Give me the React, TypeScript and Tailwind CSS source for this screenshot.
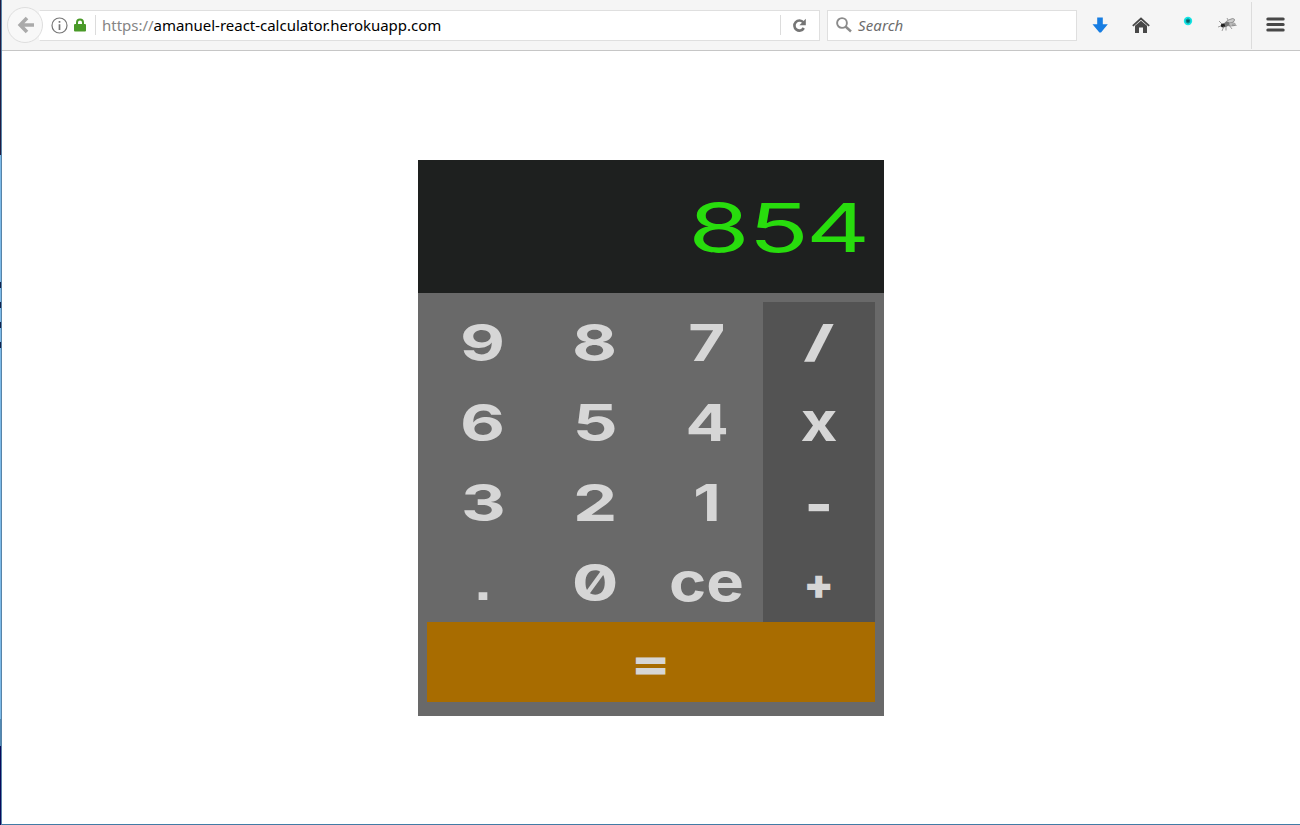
type Key = { label: string; glyph: string };

const digits: Key[] = [
  { label: "9", glyph: "translate-y-px scale-x-[1.36]" },
  { label: "8", glyph: "translate-y-px scale-x-[1.36]" },
  { label: "7", glyph: "translate-y-px scale-x-[1.25]" },
  { label: "6", glyph: "translate-y-px scale-x-[1.36]" },
  { label: "5", glyph: "translate-y-px scale-x-[1.38]" },
  { label: "4", glyph: "translate-y-px scale-x-[1.26]" },
  { label: "3", glyph: "translate-y-px scale-x-[1.36]" },
  { label: "2", glyph: "translate-y-px scale-x-[1.38]" },
  { label: "1", glyph: "translate-y-px scale-x-[1.25]" },
  { label: ".", glyph: "translate-y-px scale-x-[1.2] font-['Liberation_Sans',sans-serif]" },
  { label: "0", glyph: "translate-y-px scale-x-[1.36]" },
  { label: "ce", glyph: "-translate-y-px scale-x-[1.15] text-[55px]" },
];

const operators: Key[] = [
  { label: "/", glyph: "scale-x-[1.6] scale-y-[0.85]" },
  { label: "x", glyph: "-translate-y-px scale-x-[1.16] text-[55px]" },
  { label: "-", glyph: "translate-y-[2px] scale-x-[1.2] scale-y-[1.2]" },
  { label: "+", glyph: "translate-y-[2px] scale-x-[0.86] scale-y-[0.82] font-black" },
];

function CalcKey({ label, glyph }: Key) {
  return (
    <button className="flex h-20 w-full items-center justify-center leading-[80px]">
      <span className={`inline-block ${glyph}`}>{label}</span>
    </button>
  );
}

function Toolbar() {
  return (
    <header className="flex h-[51px] shrink-0 items-center border-b border-[#c6c6c6] bg-[#f5f5f5]">
      <div className="z-10 ml-[5px] flex size-9 shrink-0 items-center justify-center rounded-full border border-[#dedede] bg-[#f8f8f8]">
        <svg className="ml-[2px]" width="18" height="18" viewBox="0 0 18 18" fill="none" stroke="#aaa" strokeWidth="3.6">
          <path d="M17 9H4M10 2L3.2 9L10 16" />
        </svg>
      </div>
      <div className="-ml-1 flex h-[31px] w-[781px] shrink-0 items-center border border-[#dfdfdf] border-l-transparent bg-white">
        <svg className="ml-[11px]" width="17" height="17" viewBox="0 0 17 17" fill="none" stroke="#777">
          <circle cx="8.5" cy="8.5" r="7.5" strokeWidth="1.2" />
          <path d="M8.5 7.3V13M8.5 4V5.8" strokeWidth="1.7" />
        </svg>
        <svg className="ml-[6px]" width="12" height="14" viewBox="0 0 12 14">
          <path d="M3 7V4.5a3 3 0 0 1 6 0V7" fill="none" stroke="#4a9a28" strokeWidth="2" />
          <rect y="6" width="12" height="7.5" rx="1" fill="#4a9a28" />
        </svg>
        <div className="ml-[9px] h-5 w-px bg-[#dcdcdc]" />
        <div className="ml-[6px] flex-1 whitespace-nowrap text-[15px] leading-5 tracking-[-0.02px] text-black">
          <span className="text-[#858585]">https://</span>amanuel-react-calculator.herokuapp.com
        </div>
        <div className="h-5 w-px bg-[#dcdcdc]" />
        <svg className="mr-[12px] ml-[11px]" width="15" height="15" viewBox="0 0 15 15">
          <path d="M11.3 4.4A5 5 0 1 0 11.8 10" fill="none" stroke="#757575" strokeWidth="2.6" />
          <path d="M13.8 0.8V7.2H7.4Z" fill="#757575" />
        </svg>
      </div>
      <div className="ml-[7px] flex h-[31px] w-[250px] shrink-0 items-center border border-[#dfdfdf] bg-white">
        <svg className="ml-[8px]" width="16" height="16" viewBox="0 0 16 16" fill="none" stroke="#8b8b8b">
          <circle cx="6" cy="6" r="4.9" strokeWidth="1.9" />
          <path d="M9.5 9.5L15 14.5" strokeWidth="2.4" />
        </svg>
        <span className="ml-[6px] text-[15px] tracking-[0.1px] text-[#6d6d6d] italic">Search</span>
      </div>
      <svg className="ml-[15px] shrink-0" width="16" height="16" viewBox="0 0 16 16">
        <path d="M5.2 0.5H10.8V7.2H15.8L9 15.5H7.4L0.5 7.2H5.2Z" fill="#177de2" />
      </svg>
      <svg className="ml-[24px] shrink-0" width="18" height="16" viewBox="0 0 18 16">
        <path d="M0.8 8.8L9 1.5L17.2 8.8" fill="none" stroke="#484848" strokeWidth="1.8" />
        <path d="M3 8.8L9 3.7L15 8.8V16H11V10.5H7V16H3Z" fill="#484848" />
      </svg>
      <svg className="mb-2 ml-[33px] shrink-0" width="10" height="10" viewBox="0 0 10 10">
        <circle cx="5" cy="5" r="4.2" fill="#14e5e5" />
        <path d="M5 2.5V7.5M2.8 3.7L7.2 6.3M2.8 6.3L7.2 3.7" stroke="#075f68" strokeWidth="1.2" />
      </svg>
      <svg className="ml-[25px] shrink-0" width="19" height="16" viewBox="0 0 19 16">
        <ellipse cx="12" cy="4.5" rx="5" ry="2" transform="rotate(-25 12 4.5)" fill="#ccc" stroke="#888" strokeWidth="0.8" />
        <ellipse cx="13" cy="7.3" rx="4.5" ry="1.8" fill="#bbb" stroke="#888" strokeWidth="0.6" />
        <ellipse cx="8" cy="7.5" rx="3.6" ry="2.3" transform="rotate(-25 8 7.5)" fill="#777" />
        <circle cx="4.9" cy="8.5" r="2.1" fill="#222" />
        <path d="M4 7L1 4M3 9L0 10M6 9L4 14M8 9V13.5M11 8L14 12M14 8L18.5 8.5M10 3L9 1" fill="none" stroke="#777" strokeWidth="0.7" />
      </svg>
      <div className="ml-[14px] h-[47px] w-px bg-[#dcdcdc]" />
      <svg className="mb-px ml-[14px] shrink-0" width="19" height="15" viewBox="0 0 19 15" stroke="#484848" strokeWidth="3" strokeLinecap="round">
        <path d="M1.8 2H17.2M1.8 7.5H17.2M1.8 13H17.2" />
      </svg>
    </header>
  );
}

function Calculator() {
  return (
    <main className="mt-[109px] ml-[416px] h-[556px] w-[466px] bg-[#696969] font-['Inter',sans-serif] text-[#d6d6d6]">
      <div className="flex h-[133px] items-center justify-end bg-[#1e201f] pr-[17px] text-[68px] leading-[133px] text-[#28dc0d]">
        {["8", "5", "4"].map((digit) => (
          <span key={digit} className="flex w-[59px] justify-center">
            <span className="inline-block translate-y-px scale-x-[1.46] font-normal">{digit}</span>
          </span>
        ))}
      </div>
      <div className="px-[9px] pt-[9px] text-[51px] font-bold [font-feature-settings:'zero']">
        <div className="flex">
          <div className="grid w-[336px] grid-cols-3">
            {digits.map((key) => (
              <CalcKey key={key.label} {...key} />
            ))}
          </div>
          <div className="w-[112px] bg-[#535353]">
            {operators.map((key) => (
              <CalcKey key={key.label} {...key} />
            ))}
          </div>
        </div>
        <div className="bg-[#a86c00]">
          <CalcKey label="=" glyph="translate-y-[2px] scale-x-[1.1] scale-y-[0.8] font-black" />
        </div>
      </div>
    </main>
  );
}

function WindowEdge() {
  return (
    <div className="flex w-[2px] shrink-0 flex-col border-r border-[#5784a8]">
      <div className="h-[155px] bg-[#211a40]" />
      <div className="h-[127px] bg-[#7bb9e8]" />
      {[0, 1, 2, 3].map((mark) => (
        <div key={mark} className="h-[20px] border-t-[6px] border-[#10204c] bg-[#7bb9e8]" />
      ))}
      <div className="h-[357px] bg-[#7bb9e8]" />
      <div className="h-[27px] bg-[#5289b3]" />
      <div className="flex-1 bg-[#08085a]" />
    </div>
  );
}

export default function App() {
  return (
    <div className="flex h-[825px] w-[1300px] overflow-hidden bg-white font-['Noto_Sans',sans-serif]">
      <WindowEdge />
      <div className="flex flex-1 flex-col border-b border-[#427ba5]">
        <Toolbar />
        <Calculator />
      </div>
    </div>
  );
}
